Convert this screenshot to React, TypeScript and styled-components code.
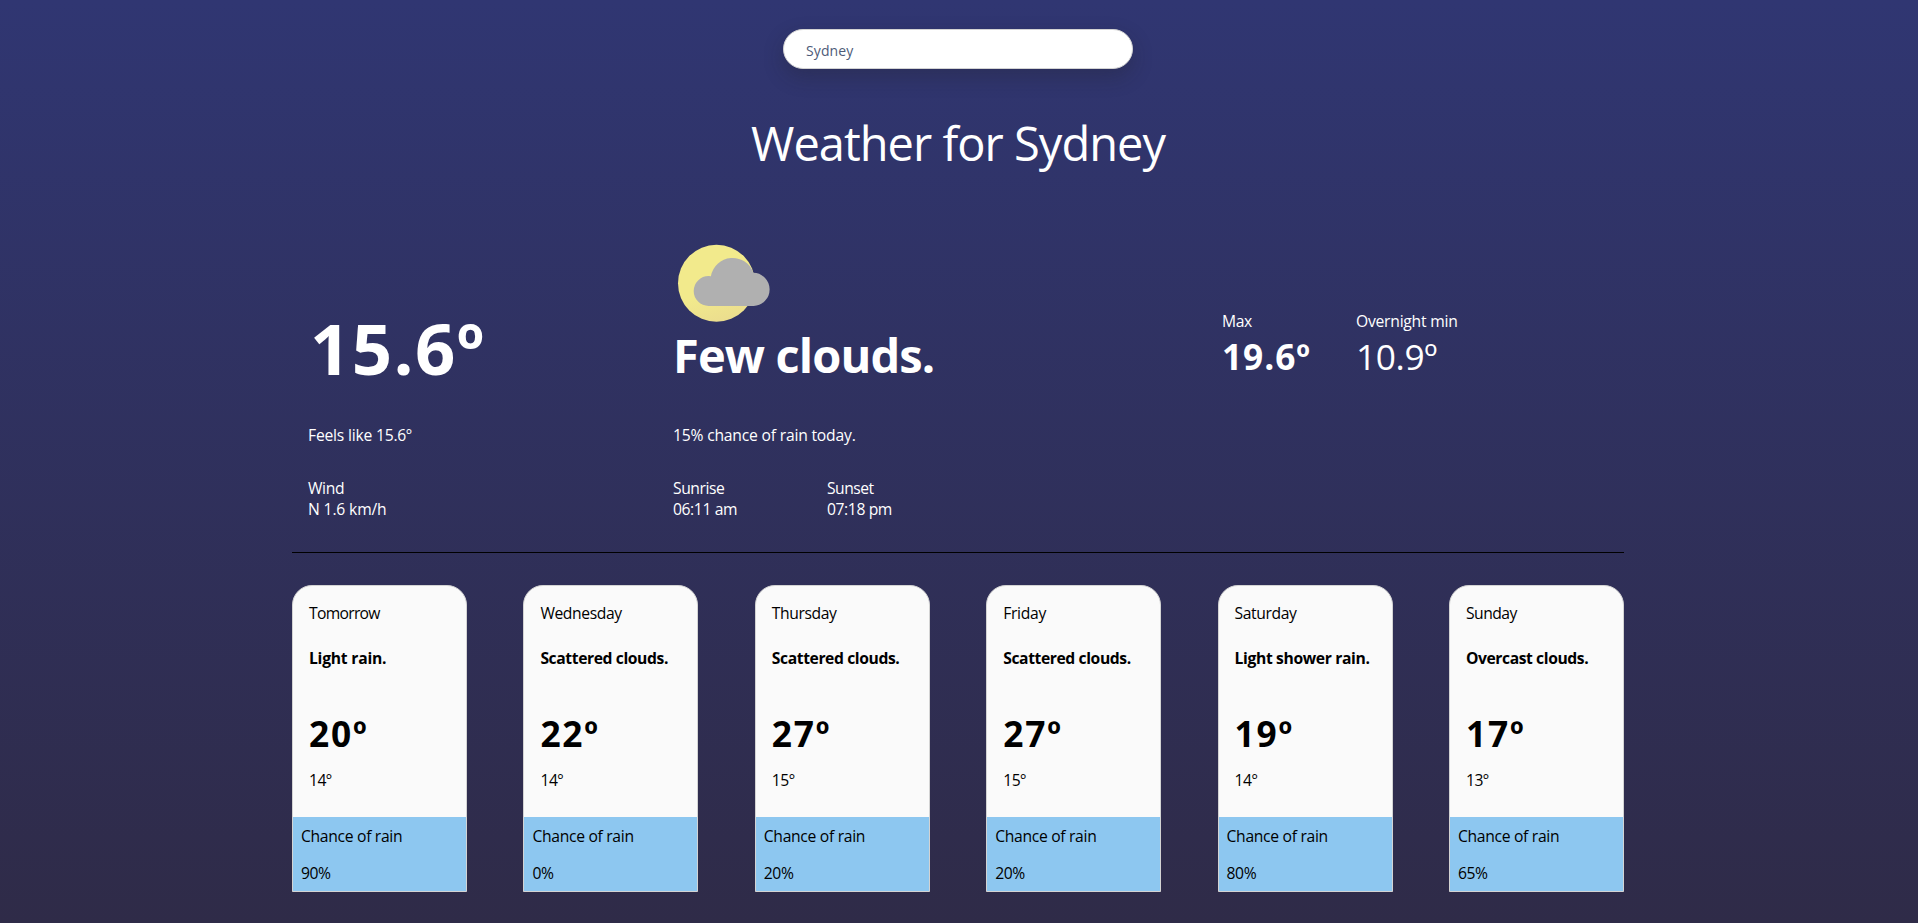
import React from "react";
import styled, { createGlobalStyle } from "styled-components";

const GlobalStyle = createGlobalStyle`
  html { height: 100%; }
  body {
    margin: 0;
    min-height: 100vh;
    background: linear-gradient(#303672, #2f2b48);
    font-family: "Open Sans", "Noto Sans", sans-serif;
    color: #fff;
  }
  * { box-sizing: border-box; }
`;

const Page = styled.main`
  display: flex;
  flex-direction: column;
  align-items: center;
  height: 923px;
  padding: 29px 2px 0 0;
  overflow: hidden;
`;

const SearchBox = styled.input`
  width: 350px;
  height: 40px;
  padding: 2px 22px 0;
  border: 1px solid #d3d3d3;
  border-radius: 20px;
  background: #fff;
  box-shadow: 0 8px 20px rgba(32, 33, 36, 0.28);
  color: #4d5b78;
  font-family: inherit;
  font-size: 14px;
  letter-spacing: 0.1px;
  outline: none;
`;

const Line = styled.p<{ $track?: number }>`
  margin: 0;
  font-size: 15.68px;
  line-height: 21px;
  letter-spacing: ${(p) => p.$track ?? -0.4}px;
  white-space: nowrap;
`;

const Title = styled.h1`
  margin: 42px 0 0;
  font-size: 47px;
  font-weight: 400;
  line-height: 64px;
  letter-spacing: -0.98px;
`;

const Current = styled.section`
  display: grid;
  grid-template-columns: 365px 549px 1fr;
  grid-template-rows: 153px 24px 42px;
  row-gap: 29px;
  width: 1332px;
  height: 310px;
  margin-top: 68px;
  padding: 0 16px;
  border-bottom: 1px solid #000;
`;

const CurrentTemp = styled.div`
  align-self: end;
  padding-left: 2px;
  font-size: 70.6px;
  font-weight: 700;
  line-height: 96px;
  letter-spacing: 1.4px;
`;

const Condition = styled.div`
  display: flex;
  flex-direction: column;
`;

const ConditionName = styled.h2`
  margin: 0;
  font-size: 47px;
  font-weight: 700;
  line-height: 64px;
  letter-spacing: -0.88px;
`;

const Range = styled.div`
  display: flex;
  gap: 134px;
  padding-top: 68px;
`;

const RangeItem = styled.div`
  width: 0;
`;

const Degrees = styled.p<{ $bold?: boolean; $track?: number }>`
  margin: 0;
  font-size: 35.3px;
  font-weight: ${(p) => (p.$bold ? 700 : 400)};
  line-height: 48px;
  letter-spacing: ${(p) => p.$track ?? 0.9}px;
  white-space: nowrap;
`;

const SunTimes = styled.div`
  display: grid;
  grid-template-columns: 154px 154px;
`;

const Forecast = styled.section`
  display: flex;
  justify-content: space-between;
  width: 1332px;
  margin-top: 32px;
`;

const Card = styled.article`
  display: flex;
  flex-direction: column;
  width: 175px;
  height: 307px;
  border: 1px solid #d3d3d3;
  border-radius: 20px 20px 0 0;
  background: #fafafa;
  color: #000;
  overflow: hidden;
`;

const CardBody = styled.div`
  flex: 1;
  padding: 17px 0 0 16px;
`;

const Summary = styled(Line)`
  margin: 24px 0 40px;
  font-weight: 700;
`;

const Low = styled(Line)`
  margin-top: 13px;
`;

const Rain = styled.div`
  display: flex;
  flex-direction: column;
  gap: 16px;
  height: 74px;
  padding: 9px 8px 0;
  background: #8dc7f0;
`;

const days = [
  { name: "Tomorrow", track: -0.7, text: "Light rain.", textTrack: -0.23, high: "20º", low: "14º", rain: "90%" },
  { name: "Wednesday", track: -0.4, text: "Scattered clouds.", textTrack: -0.4, high: "22º", low: "14º", rain: "0%" },
  { name: "Thursday", track: -0.4, text: "Scattered clouds.", textTrack: -0.4, high: "27º", low: "15º", rain: "20%" },
  { name: "Friday", track: -0.3, text: "Scattered clouds.", textTrack: -0.4, high: "27º", low: "15º", rain: "20%" },
  { name: "Saturday", track: -0.4, text: "Light shower rain.", textTrack: -0.36, high: "19º", low: "14º", rain: "80%" },
  { name: "Sunday", track: -0.5, text: "Overcast clouds.", textTrack: -0.42, high: "17º", low: "13º", rain: "65%" },
];

function FewCloudsIcon() {
  return (
    <svg width="100" height="80" viewBox="0 0 100 80" aria-hidden="true">
      <defs>
        <linearGradient id="sun" x1="0.3" y1="0" x2="0.6" y2="1">
          <stop offset="0.6" stopColor="#f2ea8c" />
          <stop offset="1" stopColor="#ebdd8e" />
        </linearGradient>
      </defs>
      <circle cx="43.5" cy="40.2" r="38.5" fill="url(#sun)" />
      <path
        d="M35.7 63A15 15 0 0 1 35.7 33Q37 33 37.9 33.2A22 22 0 0 1 80.4 29.8A16.61 16.61 0 0 1 80.7 63Z"
        fill="#b0b0b0"
      />
    </svg>
  );
}

export default function App() {
  return (
    <Page>
      <GlobalStyle />
      <SearchBox defaultValue="Sydney" aria-label="City" />
      <Title>Weather for Sydney</Title>
      <Current>
        <CurrentTemp>15.6º</CurrentTemp>
        <Condition>
          <FewCloudsIcon />
          <ConditionName>Few clouds.</ConditionName>
        </Condition>
        <Range>
          <RangeItem>
            <Line>Max</Line>
            <Degrees $bold>19.6º</Degrees>
          </RangeItem>
          <RangeItem>
            <Line $track={-0.24}>Overnight min</Line>
            <Degrees $track={-0.4}>10.9º</Degrees>
          </RangeItem>
        </Range>
        <Line $track={-0.21}>Feels like 15.6º</Line>
        <Line $track={-0.2}>15% chance of rain today.</Line>
        <span />
        <div>
          <Line $track={-0.35}>Wind</Line>
          <Line $track={-0.15}>N 1.6 km/h</Line>
        </div>
        <SunTimes>
          <div>
            <Line $track={-0.44}>Sunrise</Line>
            <Line $track={-0.4}>06:11 am</Line>
          </div>
          <div>
            <Line $track={-0.5}>Sunset</Line>
            <Line $track={-0.4}>07:18 pm</Line>
          </div>
        </SunTimes>
      </Current>
      <Forecast>
        {days.map((day) => (
          <Card key={day.name}>
            <CardBody>
              <Line $track={day.track}>{day.name}</Line>
              <Summary $track={day.textTrack}>{day.text}</Summary>
              <Degrees $bold $track={1.8}>{day.high}</Degrees>
              <Low>{day.low}</Low>
            </CardBody>
            <Rain>
              <Line $track={-0.31}>Chance of rain</Line>
              <Line>{day.rain}</Line>
            </Rain>
          </Card>
        ))}
      </Forecast>
    </Page>
  );
}
